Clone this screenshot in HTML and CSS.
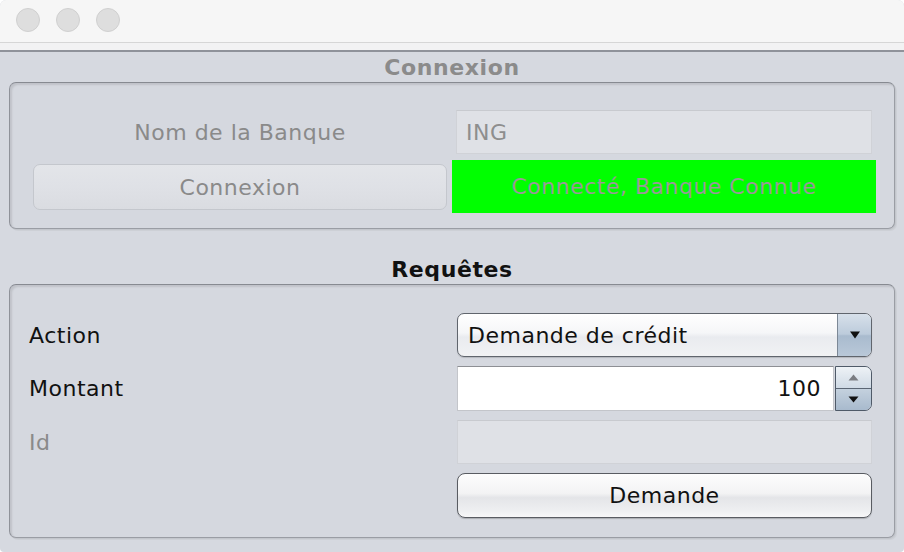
FILE: index.html
```html
<!DOCTYPE html>
<html lang="fr">
<head>
<meta charset="utf-8">
<title>Banque</title>
<link rel="stylesheet" href="styles.css">
</head>
<body>
<div class="window">
  <div class="titlebar">
    <span class="light"></span><span class="light"></span><span class="light"></span>
  </div>
  <div class="strip"></div>
  <div class="content">
    <div class="section-title muted first">Connexion</div>
    <div class="panel panel-conn">
      <div class="label center muted">Nom de la Banque</div>
      <div class="field disabled inset">ING</div>
      <div class="btn btn-disabled">Connexion</div>
      <div class="status">Connecté, Banque Connue</div>
    </div>
    <div class="section-title second">Requêtes</div>
    <div class="panel panel-req">
      <div class="label">Action</div>
      <div class="combo">
        <span class="combo-text">Demande de crédit</span>
        <span class="combo-arrow"><svg width="12" height="8" viewBox="0 0 12 8"><path d="M1 0.5h10L6 7.5z" fill="#111"/></svg></span>
      </div>
      <div class="label">Montant</div>
      <div class="spinner">
        <span class="spin-field">100</span>
        <span class="spin-btns">
          <span class="spin-up"><svg width="11" height="7" viewBox="0 0 11 7"><path d="M5.5 0.5L10.5 6.5H0.5z" fill="#7a7d82"/></svg></span>
          <span class="spin-down"><svg width="11" height="7" viewBox="0 0 11 7"><path d="M0.5 0.5H10.5L5.5 6.5z" fill="#111"/></svg></span>
        </span>
      </div>
      <div class="label muted">Id</div>
      <div class="field disabled"></div>
      <div class="spacer"></div>
      <div class="btn btn-primary">Demande</div>
    </div>
  </div>
</div>
</body>
</html>
```
FILE: styles.css
```css
* { box-sizing: border-box; }
html, body { margin: 0; padding: 0; background: #ffffff; }
body {
  font-family: "DejaVu Sans", "Lucida Grande", Verdana, sans-serif;
  font-size: 22px;
  letter-spacing: 0.5px;
  color: #111;
}
.window {
  width: 904px;
  height: 552px;
  background: #d6d9e0;
  border-radius: 6px 6px 4px 4px;
  overflow: hidden;
  display: flex;
  flex-direction: column;
}
.titlebar {
  height: 43px;
  background: #f6f6f6;
  border-bottom: 1px solid #d6d6d6;
  display: flex;
  align-items: center;
  gap: 16px;
  padding: 0 0 2px 16px;
}
.light {
  width: 24px;
  height: 24px;
  border-radius: 50%;
  background: #dedede;
  border: 1px solid #d0d0d0;
}
.strip {
  height: 9px;
  background: #f2f2f3;
  border-bottom: 2px solid #8f929a;
}
.content {
  padding: 0 9px;
}
.section-title {
  text-align: center;
  font-weight: bold;
  line-height: 28px;
  letter-spacing: 0.6px;
  color: #111;
}
.section-title.first { height: 30px; padding-top: 2px; }
.section-title.second { height: 55px; padding-top: 27px; }
.muted { color: #8a8a8a; }
.section-title.muted { color: #8b8b8b; }

.panel {
  border: 1px solid #9a9da4;
  border-top-color: #878a91;
  border-left-color: #8f9299;
  border-radius: 7px;
  box-shadow: inset 2px 2px 2px rgba(0,0,0,0.10), 1px 1px 0 #c3c6cc, 2px 2px 0 #cdd0d6;
  background: #d5d8df;
}
.panel-conn {
  display: grid;
  grid-template-columns: 414px 424px;
  grid-template-rows: 44px 53px;
  column-gap: 5px;
  row-gap: 6px;
  padding: 27px 18px 15px 23px;
  height: 147px;
}
.panel-req {
  display: grid;
  grid-template-columns: 1fr 415px;
  grid-template-rows: 44px 45px 44px 45px;
  row-gap: 9px;
  padding: 28px 22px 19px 19px;
  height: 254px;
}
.label {
  display: flex;
  align-items: center;
  white-space: nowrap;
}
.label.center { justify-content: center; }

.field {
  display: flex;
  align-items: center;
  padding-left: 9px;
  white-space: nowrap;
}
.field.disabled {
  background: #dfe1e6;
  border: 1px solid #d0d2d7;
  border-top-color: #c8cacf;
  color: #8e8e8e;
}
.field.inset { margin: 0 4px; }

.btn {
  display: flex;
  align-items: center;
  justify-content: center;
  white-space: nowrap;
}
.btn-disabled {
  margin: 4px 0 3px;
  border: 1px solid #c4c7cd;
  border-radius: 7px;
  background: linear-gradient(#e3e5e9, #dfe1e6 50%, #dadce1);
  color: #8a8a8a;
}
.status {
  background: #00ff00;
  color: #999999;
  display: flex;
  align-items: center;
  justify-content: center;
  white-space: nowrap;
}
.combo {
  display: flex;
  border: 1px solid #60656d;
  border-radius: 7px;
  overflow: hidden;
  background: linear-gradient(#ffffff, #f5f6f8 45%, #e9ebef 55%, #f1f2f4);
  box-shadow: 0 1px 1px rgba(0,0,0,0.15);
}
.combo-text {
  flex: 1;
  display: flex;
  align-items: center;
  padding-left: 10px;
  white-space: nowrap;
}
.combo-arrow {
  width: 34px;
  border-left: 1px solid #7c8896;
  background: linear-gradient(#d7e0ea, #bccbdb 48%, #a9bbce 52%, #b9c8d8);
  display: flex;
  align-items: center;
  justify-content: center;
  padding-left: 1px;
}
.spinner {
  display: flex;
}
.spin-field {
  flex: 1;
  background: #ffffff;
  border: 1px solid #c3c5ca;
  border-top-color: #8d8f94;
  display: flex;
  align-items: center;
  justify-content: flex-end;
  padding-right: 12px;
}
.spin-btns {
  width: 37px;
  margin-left: 1px;
  border: 1px solid #4f5a68;
  border-radius: 0 7px 7px 0;
  overflow: hidden;
  display: flex;
  flex-direction: column;
}
.spin-up, .spin-down {
  flex: 1;
  display: flex;
  align-items: center;
  justify-content: center;
}
.spin-up {
  background: linear-gradient(#eef2f6, #cfdae5);
  border-bottom: 1px solid #5a6573;
}
.spin-down {
  background: linear-gradient(#c4d1de, #a8bacd);
}
.btn-primary {
  border: 1px solid #595c62;
  border-radius: 8px;
  background: linear-gradient(#fdfdfd, #f3f3f4 45%, #e4e5e8 55%, #eeeff1 85%, #f7f7f8);
  box-shadow: 0 1px 1px rgba(0,0,0,0.2);
  color: #111;
}
```
